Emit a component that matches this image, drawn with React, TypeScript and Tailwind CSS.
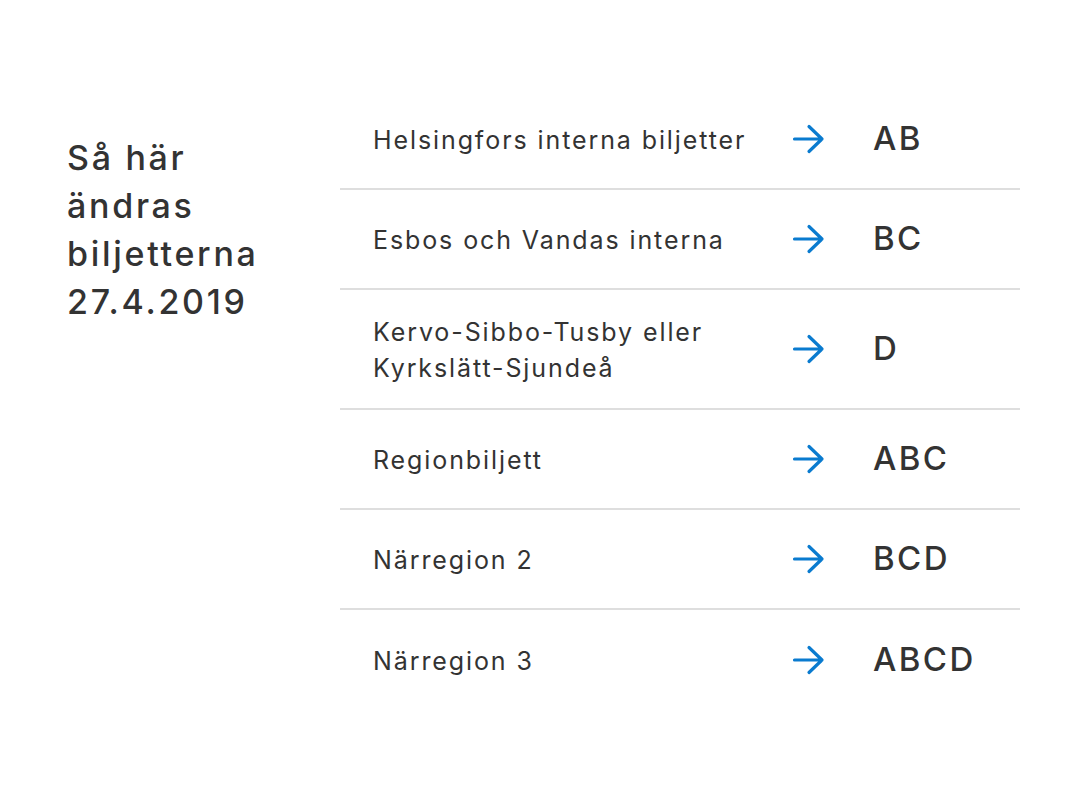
import React from "react";

type Row = {
  label: string[];
  zone: string;
  tall?: boolean;
};

const rows: Row[] = [
  { label: ["Helsingfors interna biljetter"], zone: "AB" },
  { label: ["Esbos och Vandas interna"], zone: "BC" },
  { label: ["Kervo-Sibbo-Tusby eller", "Kyrkslätt-Sjundeå"], zone: "D", tall: true },
  { label: ["Regionbiljett"], zone: "ABC" },
  { label: ["Närregion 2"], zone: "BCD" },
  { label: ["Närregion 3"], zone: "ABCD" },
];

const Arrow = () => (
  <svg width="33" height="32" viewBox="0 0 33 32" fill="none" className="shrink-0">
    <path
      d="M2.5 16H30M17 3.5L30 16L17 28.5"
      stroke="#0a7bcf"
      strokeWidth="3.2"
      strokeLinecap="round"
      strokeLinejoin="round"
    />
  </svg>
);

export default function App() {
  return (
    <div
      className="flex h-[800px] w-[1080px] bg-white pl-[67px] pt-[90px] text-[#333333]"
      style={{ fontFamily: '"Inter", "Liberation Sans", sans-serif' }}
    >
      <div className="w-[273px] shrink-0 pt-[44px]">
        <h1 className="text-[34px] font-medium leading-[48px] tracking-[2.7px]">
          Så här
          <br />
          ändras
          <br />
          biljetterna
          <br />
          27.4.2019
        </h1>
      </div>
      <div className="w-[680px]">
        {rows.map((r, i) => (
          <div
            key={r.zone}
            className={`flex items-center ${r.tall ? "h-[120px]" : "h-[100px]"} ${
              i < rows.length - 1 ? "border-b-2 border-[#dedede]" : ""
            }`}
          >
            <div className="w-[452px] shrink-0 pl-[33px] pt-[1px] text-[25px] leading-[36px] font-normal tracking-[1.9px]">
              {r.label.map((l) => (
                <div key={l}>{l}</div>
              ))}
            </div>
            <Arrow />
            <div className="pl-[48px] text-[33px] font-medium tracking-[2.4px]">{r.zone}</div>
          </div>
        ))}
      </div>
    </div>
  );
}
